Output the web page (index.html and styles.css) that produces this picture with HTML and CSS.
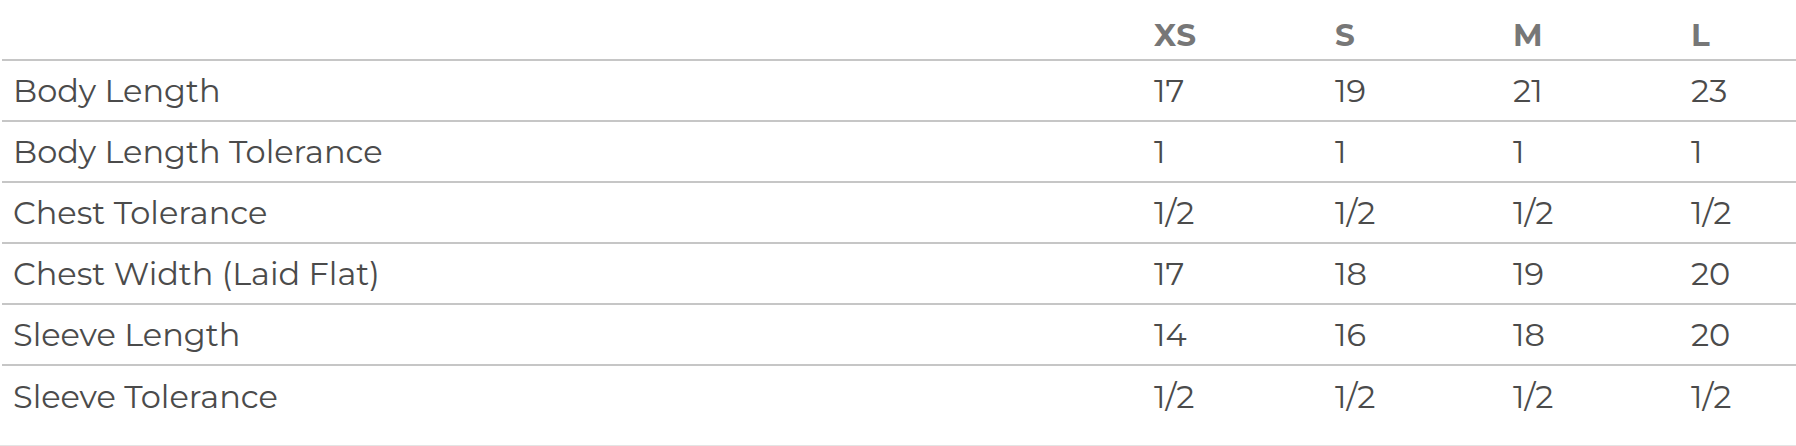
FILE: index.html
```html
<!DOCTYPE html>
<html lang="en">
<head>
<meta charset="utf-8">
<title>Size Chart</title>
<link rel="stylesheet" href="styles.css">
</head>
<body>
<div class="chart">
  <table class="sizes">
    <colgroup>
      <col class="c-label">
      <col class="c-xs">
      <col class="c-s">
      <col class="c-m">
      <col class="c-l">
    </colgroup>
    <thead>
      <tr>
        <th></th>
        <th>XS</th>
        <th>S</th>
        <th>M</th>
        <th>L</th>
      </tr>
    </thead>
    <tbody>
      <tr><td>Body Length</td><td>17</td><td>19</td><td>21</td><td>23</td></tr>
      <tr><td>Body Length Tolerance</td><td>1</td><td>1</td><td>1</td><td>1</td></tr>
      <tr><td>Chest Tolerance</td><td>1/2</td><td>1/2</td><td>1/2</td><td>1/2</td></tr>
      <tr><td>Chest Width (Laid Flat)</td><td>17</td><td>18</td><td>19</td><td>20</td></tr>
      <tr><td>Sleeve Length</td><td>14</td><td>16</td><td>18</td><td>20</td></tr>
      <tr class="last"><td>Sleeve Tolerance</td><td>1/2</td><td>1/2</td><td>1/2</td><td>1/2</td></tr>
    </tbody>
  </table>
</div>
</body>
</html>
```

FILE: styles.css
```css
html, body {
  margin: 0;
  padding: 0;
  background: #ffffff;
}

.chart {
  padding-left: 2px;
  border-bottom: 1px solid #e4e4e4;
}

.sizes {
  width: 100%;
  border-collapse: collapse;
  table-layout: fixed;
  font-family: "Montserrat", "Open Sans", "Liberation Sans", sans-serif;
}

.c-label { width: 1140px; }
.c-xs { width: 181px; }
.c-s { width: 178px; }
.c-m { width: 178px; }

.sizes th {
  height: 60px;
  padding: 0 0 5px 12px;
  box-sizing: border-box;
  vertical-align: bottom;
  text-align: left;
  font-size: 31px;
  font-weight: 700;
  letter-spacing: 0.5px;
  color: #777777;
  border-bottom: 2px solid #c6c6c6;
}

.sizes td {
  height: 61px;
  padding: 0 0 0 11px;
  box-sizing: border-box;
  vertical-align: middle;
  text-align: left;
  font-size: 32px;
  font-weight: 400;
  color: #4b4b4b;
  border-bottom: 2px solid #c6c6c6;
  white-space: nowrap;
}

.sizes td + td {
  padding-left: 12px;
}

.sizes tr.last td {
  border-bottom: none;
  height: 80px;
  padding-bottom: 19px;
}
```
